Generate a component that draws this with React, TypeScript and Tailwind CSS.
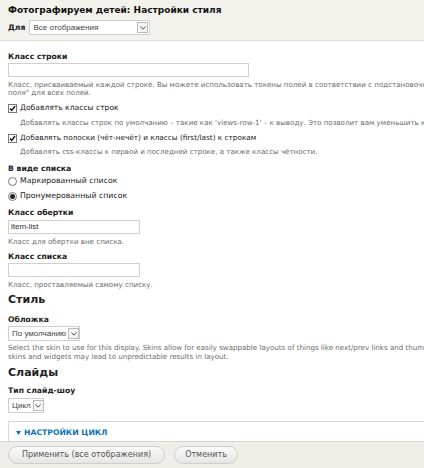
const font = { fontFamily: '"DejaVu Sans", Verdana, sans-serif' }
const arial = { fontFamily: '"Liberation Sans", Arial, sans-serif' }

function Select({ value, width }: { value: string; width: string }) {
  return (
    <div className={`flex h-[15px] items-center justify-between gap-[2px] border border-[#cfcfcf] bg-white pl-[3px] pr-[1px] ${width}`}>
      <span className="whitespace-nowrap text-[8px] leading-[10px] text-[#444]" style={arial}>
        {value}
      </span>
      <span className="flex h-[11px] w-[11px] shrink-0 items-center justify-center border border-[#bbb] bg-[#f4f4f4]">
        <svg width="6" height="4" viewBox="0 0 6 4">
          <path d="M0.5 0.5 L3 3.2 L5.5 0.5" fill="none" stroke="#555" strokeWidth="1" />
        </svg>
      </span>
    </div>
  )
}

function Checkbox() {
  return (
    <span className="flex h-[9px] w-[9px] shrink-0 items-center justify-center border border-[#777] bg-white">
      <svg width="7" height="7" viewBox="0 0 7 7">
        <path d="M1 3.5 L2.8 5.5 L6 1" fill="none" stroke="#111" strokeWidth="1.4" />
      </svg>
    </span>
  )
}

function Radio({ checked }: { checked?: boolean }) {
  return (
    <span className="flex h-[9px] w-[9px] shrink-0 items-center justify-center rounded-full border border-[#777] bg-white">
      {checked && <span className="h-[5px] w-[5px] rounded-full bg-[#222]" />}
    </span>
  )
}

function Label({ children, className = '' }: { children: React.ReactNode; className?: string }) {
  return <div className={`h-[10px] text-[7.7px] font-bold leading-[10px] text-[#222] ${className}`}>{children}</div>
}

function Desc({ children, className = '' }: { children: React.ReactNode; className?: string }) {
  return <div className={`whitespace-nowrap text-[7.1px] leading-[8px] text-[#6a6a6a] ${className}`}>{children}</div>
}

function Input({ value, width }: { value?: string; width: string }) {
  return (
    <div
      className={`flex h-[14px] items-center border border-[#cfcfcf] bg-white px-[2px] text-[8px] text-[#333] ${width}`}
      style={arial}
    >
      {value}
    </div>
  )
}

export default function App() {
  return (
    <div className="relative h-[468px] w-[424px] overflow-hidden bg-white" style={font}>
      <div className="h-[41px] border-b border-[#dcdcd6] bg-[#f3f2ed] px-[8px] pt-[4px]">
        <div className="whitespace-nowrap text-[9px] font-bold leading-[12px] text-[#111]">
          Фотографируем детей: Настройки стиля
        </div>
        <div className="mt-[4px] flex items-center gap-[4px]">
          <span className="text-[7.7px] font-bold text-[#222]">Для</span>
          <Select value="Все отображения" width="w-[121px]" />
        </div>
      </div>

      <div className="px-[8px] pt-[11px]">
        <Label>Класс строки</Label>
        <div className="mt-[1px]">
          <Input width="w-[241px]" />
        </div>
        <Desc className="mt-[4px]">
          Класс, присваиваемый каждой строке. Вы можете использовать токены полей в соответствии с подстановочными
          <br />
          поля" для всех полей.
        </Desc>

        <div className="mt-[6px] flex h-[10px] items-center gap-[3px] whitespace-nowrap text-[7.6px] text-[#222]">
          <Checkbox />
          <span>Добавлять классы строк</span>
        </div>
        <Desc className="ml-[12px] mt-[6px]">
          Добавлять классы строк по умолчанию – такие как 'views-row-1' – к выводу. Это позволит вам уменьшить количество
        </Desc>
        <div className="mt-[6px] flex h-[10px] items-center gap-[3px] whitespace-nowrap text-[7.3px] text-[#222]">
          <Checkbox />
          <span>Добавлять полоски (чёт-нечёт) и классы (first/last) к строкам</span>
        </div>
        <Desc className="ml-[12px] mt-[5px]">Добавлять css-классы к первой и последней строке, а также классы чётности.</Desc>

        <Label className="mt-[8px]">В виде списка</Label>
        <div className="mt-[2px] flex h-[10px] items-center gap-[3px] whitespace-nowrap text-[7.8px] text-[#222]">
          <Radio />
          <span>Маркированный список</span>
        </div>
        <div className="mt-[5px] flex h-[10px] items-center gap-[3px] whitespace-nowrap text-[7.8px] text-[#222]">
          <Radio checked />
          <span>Пронумерованный список</span>
        </div>

        <Label className="mt-[7px]">Класс обертки</Label>
        <div className="mt-[2px]">
          <Input value="item-list" width="w-[132px]" />
        </div>
        <Desc className="mt-[4px]">Класс для обертки вне списка.</Desc>

        <Label className="mt-[6px]">Класс списка</Label>
        <div className="mt-[1px]">
          <Input width="w-[132px]" />
        </div>
        <Desc className="mt-[4px]">Класс, проставляемый самому списку.</Desc>

        <div className="mt-[3px] h-[16px] text-[11px] font-bold leading-[16px] text-[#222]">Стиль</div>
        <Label className="mt-[7px]">Обложка</Label>
        <div className="mt-[1px]">
          <Select value="По умолчанию" width="w-[72px]" />
        </div>
        <Desc className="mt-[2px] leading-[9px]">
          Select the skin to use for this display. Skins allow for easily swappable layouts of things like next/prev links and thumbnails.
          <br />
          skins and widgets may lead to unpredictable results in layout.
        </Desc>

        <div className="mt-[4px] h-[16px] text-[11px] font-bold leading-[16px] text-[#222]">Слайды</div>
        <Label className="mt-[5px]">Тип слайд-шоу</Label>
        <div className="mt-[2px]">
          <Select value="Цикл" width="w-[36px]" />
        </div>

        <div className="mr-[-8px] mt-[8px] h-[40px] border border-b-0 border-r-0 border-[#d8d8d8] px-[7px] pt-[5px]">
          <div className="flex items-center gap-[3px] text-[7.7px] font-bold text-[#0b72b5]">
            <svg width="5" height="4" viewBox="0 0 5 4">
              <path d="M0 0 L5 0 L2.5 4 Z" fill="#0b72b5" />
            </svg>
            <span>НАСТРОЙКИ ЦИКЛ</span>
          </div>
          <div className="ml-[3px] mt-[5px] h-[6px] w-[6px] bg-[#333]" />
        </div>
      </div>

      <div className="absolute bottom-0 left-0 flex h-[27px] w-full items-center gap-[9px] border-t border-[#d6d6d0] bg-[#efeee9] px-[8px]">
        <button className="h-[18px] w-[157px] rounded-full border border-[#cfcfcf] bg-gradient-to-b from-[#fafafa] to-[#e6e6e3] text-[8px] text-[#555]">
          Применить (все отображения)
        </button>
        <button className="h-[18px] w-[64px] rounded-full border border-[#cfcfcf] bg-gradient-to-b from-[#fafafa] to-[#e6e6e3] text-[8px] text-[#555]">
          Отменить
        </button>
      </div>
    </div>
  )
}
